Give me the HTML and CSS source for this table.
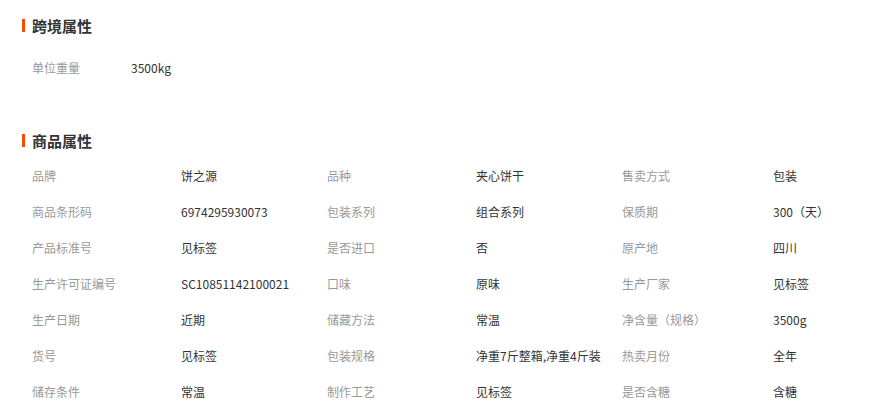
FILE: index.html
```html
<!DOCTYPE html>
<html lang="zh-CN">
<head>
    <meta charset="UTF-8">
    <meta name="viewport" content="width=device-width, initial-scale=1.0">
    <title>商品属性</title>
    <link rel="stylesheet" href="styles.css">
</head>
<body>
    <!-- Cross-border attributes -->
    <div class="section cross">
        <h3 class="section-title">跨境属性</h3>
        <div class="kv-list">
            <div class="kv-row">
                <span class="label">单位重量</span>
                <span class="value">3500kg</span>
            </div>
        </div>
    </div>

    <!-- Product attributes -->
    <div class="section goods">
        <h3 class="section-title">商品属性</h3>
        <div class="attr-grid">
            <span class="label">品牌</span><span class="value">饼之源</span>
            <span class="label">品种</span><span class="value">夹心饼干</span>
            <span class="label">售卖方式</span><span class="value">包装</span>

            <span class="label">商品条形码</span><span class="value">6974295930073</span>
            <span class="label">包装系列</span><span class="value">组合系列</span>
            <span class="label">保质期</span><span class="value">300（天）</span>

            <span class="label">产品标准号</span><span class="value">见标签</span>
            <span class="label">是否进口</span><span class="value">否</span>
            <span class="label">原产地</span><span class="value">四川</span>

            <span class="label">生产许可证编号</span><span class="value">SC10851142100021</span>
            <span class="label">口味</span><span class="value">原味</span>
            <span class="label">生产厂家</span><span class="value">见标签</span>

            <span class="label">生产日期</span><span class="value">近期</span>
            <span class="label">储藏方法</span><span class="value">常温</span>
            <span class="label">净含量（规格）</span><span class="value">3500g</span>

            <span class="label">货号</span><span class="value">见标签</span>
            <span class="label">包装规格</span><span class="value">净重7斤整箱,净重4斤装</span>
            <span class="label">热卖月份</span><span class="value">全年</span>

            <span class="label">储存条件</span><span class="value">常温</span>
            <span class="label">制作工艺</span><span class="value">见标签</span>
            <span class="label">是否含糖</span><span class="value">含糖</span>
        </div>
    </div>
</body>
</html>
```

FILE: styles.css
```css
body {
    margin: 0;
    padding: 15px 0 0 22px;
    background: #fff;
    color: #333;
    font-family: "Microsoft YaHei", "Noto Sans CJK SC", "Liberation Sans", sans-serif;
    font-size: 12px;
}
.section-title {
    display: flex;
    align-items: center;
    margin: 0;
    height: 20px;
    font-size: 15px;
    font-weight: bold;
    color: #333;
}
.section-title::before {
    content: "";
    width: 3px;
    height: 13px;
    margin-right: 7px;
    background: #ff4a00;
}
.kv-list {
    margin-top: 15px;
    padding-left: 10px;
}
.kv-row {
    display: flex;
    line-height: 36px;
}
.kv-row .label {
    width: 99px;
}
.goods {
    margin-top: 44px;
}
.attr-grid {
    display: grid;
    grid-template-columns: 149px 146px 149px 146px 151px 1fr;
    grid-auto-rows: 36px;
    align-items: center;
    margin-top: 7px;
    padding-left: 10px;
}
.label {
    color: #999;
    white-space: nowrap;
}
.value {
    color: #333;
    white-space: nowrap;
}
```
